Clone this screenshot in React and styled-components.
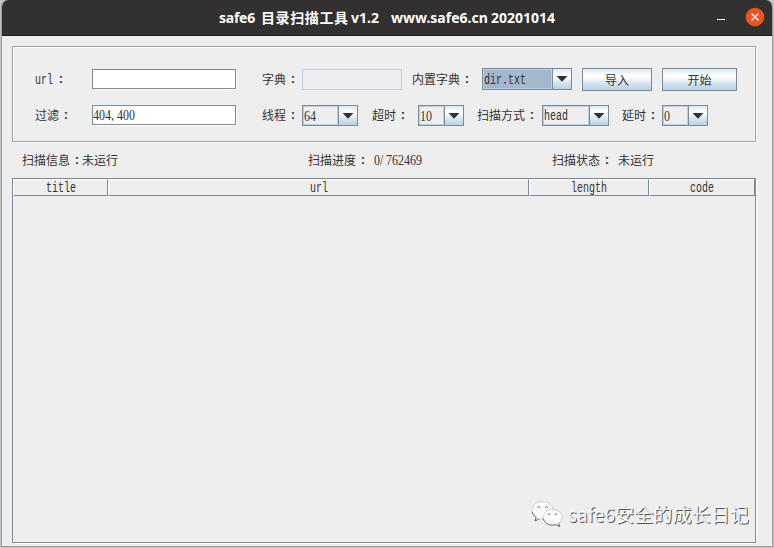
import React from "react";
import styled, { createGlobalStyle, css } from "styled-components";

const Global = createGlobalStyle`
  * { box-sizing: border-box; }
  body { margin: 0; background: #c4c4c4; overflow: hidden; }
`;

const Window = styled.main`
  width: 772px;
  height: 547px;
  margin-left: 1px;
  display: flex;
  flex-direction: column;
  background: #eeeeee;
  border: 1px solid #999;
  border-width: 0 1px 1px;
  border-radius: 7px 7px 0 0;
  color: #333;
  font: 12px/18px "Noto Sans CJK SC", sans-serif;
  overflow: hidden;
`;

const TitleBar = styled.header`
  height: 36px;
  flex: none;
  display: grid;
  grid-template-columns: 217px 337px 161px 28px 20px;
  align-items: center;
  background: #323031;
  border-bottom: 1px solid #1c1a1b;
  color: #fff;
`;

const Title = styled.h1`
  grid-column: 2;
  margin: 0;
  display: flex;
  font: bold 14px/20px "Noto Sans", "Noto Sans CJK SC", sans-serif;
  white-space: pre;
`;

const TitlePart = styled.span`
  width: ${(p) => p.$w}px;
  letter-spacing: ${(p) => p.$track || 0}px;
`;

const Minimize = styled.span`
  grid-column: 4;
  width: 8px;
  height: 1px;
  margin-top: 4px;
  background: #fff;
`;

const Close = styled.svg`
  grid-column: 5;
  width: 20px;
  height: 20px;
  margin-top: -1px;
`;

const Content = styled.div`
  padding: 10px 0 0 10px;
  width: 755px;
`;

const Panel = styled.section`
  width: 744px;
  height: 96px;
  padding: 22px 0 0 22px;
  border: 1px solid #a0a0a0;
  box-shadow: 1px 1px #fff, inset 1px 1px #fff;
`;

const Row = styled.div`
  display: grid;
  grid-template-columns: ${(p) => p.$cols};
  height: 36px;
  align-items: start;
`;

const Label = styled.label`
  display: flex;
  height: 20px;
  align-items: center;
  white-space: pre;
`;

const Colon = styled.span`
  width: 12px;
  padding-left: ${(p) => p.$shift ?? 2}px;
  margin-left: ${(p) => p.$gap || 0}px;
  margin-right: ${(p) => p.$after || 0}px;
  display: inline-flex;
  justify-content: center;
  font: bold 13px/16px "Liberation Sans", sans-serif;
`;

const FixedBox = styled.span`
  display: inline-block;
  width: ${(p) => p.$n * 6}px;
  height: 18px;
  margin-top: ${(p) => p.$lift || 0}px;
  white-space: pre;
`;

const MonoText = styled.span`
  display: inline-block;
  font: 14px/17px "Liberation Mono", monospace;
  transform: scaleX(0.714);
  transform-origin: left center;
`;

const DigitText = styled.span`
  display: inline-block;
  font: 15px/17px "Liberation Serif", serif;
  transform: scaleX(0.8);
  transform-origin: left center;
`;

const DigitCell = styled.span`
  display: inline-block;
  width: 7.5px;
`;

const field = css`
  display: flex;
  align-items: center;
  width: ${(p) => p.$w}px;
`;

const Field = styled.div`
  ${field}
  height: 20px;
  background: #fff;
  border: 1px solid #7a8a99;
  box-shadow: 1px 1px #fff;
`;

const DisabledField = styled.div`
  ${field}
  height: 21px;
  border: 1px solid #b8cfe5;
`;

const Combo = styled.div`
  ${field}
  height: ${(p) => (p.$active ? 22 : 21)}px;
  margin-top: ${(p) => (p.$active ? -1 : 0)}px;
  align-items: stretch;
  border: 1px solid #7a8a99;
`;

const ComboValue = styled.div`
  flex: 1;
  display: flex;
  align-items: center;
  border: 1px solid #b8cfe5;
  background: ${(p) => (p.$active ? "#a3b8cc" : "#eeeeee")};
`;

const metal = css`
  background: linear-gradient(#dde8f3 0%, #ffffff 30%, #ffffff 38%, #dbe6f1 65%, #b8cfe5 100%);
`;

const ComboArrow = styled.div`
  ${metal}
  width: 19px;
  display: flex;
  align-items: center;
  justify-content: center;
  border-left: 1px solid #7a8a99;
`;

const Button = styled.button`
  ${metal}
  width: ${(p) => p.$w}px;
  height: 23px;
  margin: -1px 0 0;
  padding: 0;
  border: 1px solid #7a8a99;
  color: #333;
  font: 12px/19px "Noto Sans CJK SC", sans-serif;
`;

const Status = styled.div`
  display: grid;
  grid-template-columns: 286px 244px 180px;
  align-items: center;
  height: 36px;
  padding-left: 10px;
`;

const Table = styled.section`
  width: 744px;
  height: 365px;
  border: 1px solid #7a8a99;
  box-shadow: 1px 1px #fff;
`;

const TableHead = styled.div`
  display: grid;
  grid-template-columns: 95px 421px 120px 106px;
  height: 18px;
`;

const HeadCell = styled.div`
  display: flex;
  align-items: center;
  justify-content: center;
  height: 17px;
  border: solid;
  border-width: 1px;
  border-color: #fff #7a8a99 #7a8a99 #fff;
`;

const Watermark = styled.div`
  position: absolute;
  left: 531px;
  top: 499px;
  display: flex;
  align-items: center;
  gap: 5px;
  color: #f6f6f6;
  font: 19px/29px "Noto Sans CJK SC", sans-serif;
  letter-spacing: 0.1px;
  white-space: nowrap;
  text-shadow: 1px 1px 0.6px #555;
`;

const Mono = ({ children, lift }) => (
  <FixedBox $n={children.length} $lift={lift}><MonoText>{children}</MonoText></FixedBox>
);

const Digits = ({ children }) => (
  <FixedBox $n={children.length}>
    <DigitText>
      {[...children].map((char, i) => <DigitCell key={i}>{char}</DigitCell>)}
    </DigitText>
  </FixedBox>
);

const Caption = ({ children, gap }) => (
  <Label>{children}<Colon $gap={gap}>:</Colon></Label>
);

const Select = ({ width, active, children }) => (
  <Combo $w={width} $active={active}>
    <ComboValue $active={active}>{children}</ComboValue>
    <ComboArrow>
      <svg width="12" height="6" viewBox="0 0 12 6"><path d="M0.5 0h11L6 5.8z" fill="#333" /></svg>
    </ComboArrow>
  </Combo>
);

const WeChat = () => (
  <svg width="32" height="28" viewBox="0 0 32 28" fill="#fbfbfb" stroke="#aaa" strokeWidth=".5">
    <path d="M11.5 1.5C5.5 1.5 1 5.3 1 10.3c0 3 1.6 5.3 4.2 7L4 21l4.2-2.2c1.3.4 2.4.5 3.8.5 6 0 10-4 10-9s-4.5-8.8-10.5-8.8z" />
    <path d="M21.5 9.5c-5.4 0-9.3 3.4-9.3 7.8s3.9 7.8 9.3 7.8c1.2 0 2.3-.2 3.3-.5l4 2-1.1-3.3c2-1.5 3.3-3.5 3.3-6 0-4.4-4.1-7.8-9.5-7.8z" />
    <path d="M1.2 12q.8 3.6 4 5.3L4 21l4.2-2.2M12.3 18.5c.9 4.2 5.4 6.9 9.2 6.6 1.2 0 2.3-.2 3.3-.5l4 2-1.1-3.3" fill="none" stroke="#555" strokeWidth=".8" />
    <path d="M6.3 7.8q1.5-2.8 3 0M14 7.8q1.5-2.8 3 0M17 14.8q1.2-2.2 2.4 0M23.6 14.8q1.2-2.2 2.4 0" fill="none" stroke="#555" strokeWidth=".9" />
  </svg>
);

export default function App() {
  return (
    <>
      <Global />
      <Window>
        <TitleBar>
          <Title>
            <TitlePart $w={42} $track={-0.25}>safe6</TitlePart>
            <TitlePart $w={90} $track={0.6}>目录扫描工具</TitlePart>
            <TitlePart $w={40}>v1.2</TitlePart>
            <TitlePart $w={100}>www.safe6.cn</TitlePart>
            <TitlePart $w={65}>20201014</TitlePart>
          </Title>
          <Minimize />
          <Close viewBox="0 0 20 20">
            <circle cx="10" cy="10" r="9.3" fill="#e95420" />
            <path d="M6.5 6.5l7 7M13.5 6.5l-7 7" stroke="#fff" strokeWidth="1.3" />
          </Close>
        </TitleBar>
        <Content>
          <Panel>
            <Row $cols="57px 170px 40px 110px 70px 100px 80px 75px">
              <Caption gap={1}><Mono>url</Mono></Caption>
              <Field $w={144} />
              <Caption>字典</Caption>
              <DisabledField $w={100} />
              <Caption>内置字典</Caption>
              <Select width={90} active><Mono>dir.txt</Mono></Select>
              <Button $w={70}>导入</Button>
              <Button $w={75}>开始</Button>
            </Row>
            <Row $cols="57px 170px 40px 70px 46px 59px 65px 80px 40px 46px">
              <Caption>过滤</Caption>
              <Field $w={144}><Digits>404,400</Digits></Field>
              <Caption>线程</Caption>
              <Select width={56}><Digits>64</Digits></Select>
              <Caption>超时</Caption>
              <Select width={46}><Digits>10</Digits></Select>
              <Caption>扫描方式</Caption>
              <Select width={67}><Mono lift={-1}>head</Mono></Select>
              <Caption>延时</Caption>
              <Select width={46}><Digits>0</Digits></Select>
            </Row>
          </Panel>
          <Status>
            <Label>扫描信息<Colon>:</Colon>未运行</Label>
            <Label>扫描进度<Colon $shift={0} $gap={1} $after={5}>:</Colon><Digits>0/762469</Digits></Label>
            <Label>扫描状态<Colon $shift={0} $gap={1} $after={5}>:</Colon>未运行</Label>
          </Status>
          <Table>
            <TableHead>
              <HeadCell><Mono lift={-2}>title</Mono></HeadCell>
              <HeadCell><Mono lift={-2}>url</Mono></HeadCell>
              <HeadCell><Mono lift={-2}>length</Mono></HeadCell>
              <HeadCell><Mono lift={-2}>code</Mono></HeadCell>
            </TableHead>
          </Table>
        </Content>
      </Window>
      <Watermark><WeChat />safe6安全的成长日记</Watermark>
    </>
  );
}
